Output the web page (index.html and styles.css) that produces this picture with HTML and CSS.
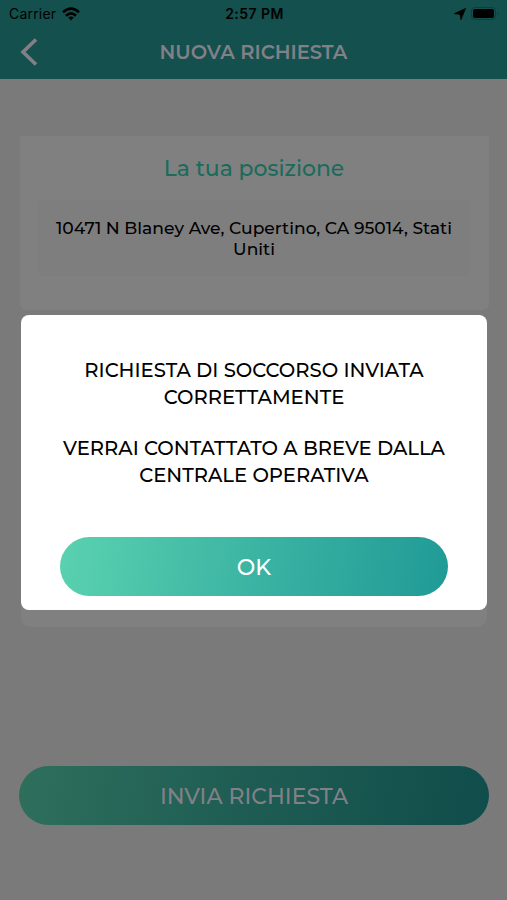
FILE: index.html
```html
<!DOCTYPE html>
<html lang="it">
<head>
<meta charset="utf-8">
<title>Nuova richiesta</title>
<link rel="stylesheet" href="styles.css">
</head>
<body>
<div class="screen">
  <header class="header">
    <div class="status">
      <div class="status-left"><span class="carrier">Carrier</span>
        <svg class="wifi" viewBox="0 0 18 14"><g fill="none" stroke="#000" stroke-width="2.6"><path d="M1 5.2Q9-2 17 5.2"/><path d="M4 8.7Q9 4.2 14 8.7"/></g><path d="M9 13.5 6.2 10.6Q9 8.5 11.8 10.6Z"/></svg>
      </div>
      <span class="time">2:57 PM</span>
      <div class="status-right">
        <svg class="location" viewBox="0 0 12 12"><path d="M11.5.5 7 11.6 6 6.3.5 5.6Z" stroke="#000" stroke-width=".8" stroke-linejoin="round"/></svg>
        <svg class="battery" viewBox="0 0 29 13"><rect x=".5" y=".5" width="24" height="12" rx="3.5" fill="none" stroke="#0c403d"/><rect x="2" y="2" width="21" height="9" rx="2"/><path d="M26.5 4.5Q28.5 6.5 26.5 8.5Z" fill="#0c403d"/></svg>
      </div>
    </div>
    <div class="nav">
      <svg class="back" viewBox="0 0 18 28"><path d="M16 1.5 3 14l13 12.5" fill="none" stroke="#828087" stroke-width="3.6"/></svg>
      <h1 class="nav-title">NUOVA RICHIESTA</h1>
    </div>
  </header>
  <main class="content">
    <section class="card position-card">
      <h2 class="card-title">La tua posizione</h2>
      <p class="address">10471 N Blaney Ave, Cupertino, CA 95014, Stati<br>Uniti</p>
    </section>
    <section class="card details-card"></section>
    <button class="pill send">INVIA RICHIESTA</button>
  </main>
</div>
<div class="modal">
  <p class="message">RICHIESTA DI SOCCORSO INVIATA<br>CORRETTAMENTE</p>
  <p class="message">VERRAI CONTATTATO A BREVE DALLA<br>CENTRALE OPERATIVA</p>
  <button class="pill ok">OK</button>
</div>
</body>
</html>
```
FILE: styles.css
```css
* { box-sizing: border-box; }
body { margin: 0; font-family: Montserrat, Inter, sans-serif; font-weight: 500; color: #000; }
h1, h2, p { margin: 0; font-weight: 500; white-space: nowrap; }
.screen { width: 507px; height: 900px; background: #7a7a7a; overflow: hidden; }
.header { height: 79px; background: #14504d; }
.status { height: 27px; padding: 0 7px 0 9px; display: grid; grid-template-columns: 1fr auto 1fr; align-items: center; font: 400 14px Inter, sans-serif; }
.status-left, .status-right { display: flex; align-items: center; }
.status-left { gap: 6px; }
.carrier { letter-spacing: .2px; }
.status-right { justify-content: flex-end; gap: 5px; }
.wifi { width: 18px; height: 14px; }
.location { width: 12px; height: 12px; }
.battery { width: 29px; height: 13px; }
.time { font-weight: 600; letter-spacing: .45px; }
.nav { height: 50px; display: grid; grid-template-columns: 39px 1fr 39px; align-items: center; }
.back { width: 18px; height: 28px; margin-left: 20px; }
.nav-title { font-size: 19.5px; font-weight: 600; text-align: center; color: #828087; }
.content { padding: 57px 18px 0 19px; display: flex; flex-direction: column; }
.card { background: #808080; }
.position-card { height: 174px; margin-left: 1px; padding: 18px 18px 0 17px; text-align: center; border-radius: 2px 2px 6px 6px; }
.card-title { font-size: 21.9px; line-height: 28px; color: #1b6b5c; }
.address { margin-top: 18px; height: 76px; padding-top: 18px; border-radius: 6px; background: #7e7e7e; font-size: 17.15px; line-height: 20.5px; }
.details-card { height: 309px; margin: 8px 2px 0; border-radius: 10px; }
.pill { border: 0; padding: 2px 0 0; height: 59px; border-radius: 30px; font: 500 22px Montserrat, Inter, sans-serif; }
.send { margin-top: 139px; color: #828087; background: linear-gradient(100deg, #2e6f5c, #1e5c53 50%, #104d4b); }
.modal { position: absolute; left: 21px; top: 315px; width: 466px; height: 295px; padding: 42px 39px 0; border-radius: 8px; background: #fff; text-align: center; display: flex; flex-direction: column; }
.message { font-size: 19.6px; line-height: 27px; align-self: center; }
.message + .message { margin-top: 24px; }
.ok { margin-top: 48px; color: #fff; background: linear-gradient(100deg, #5ad2b0, #3bb4a3 50%, #209a96); }
```
